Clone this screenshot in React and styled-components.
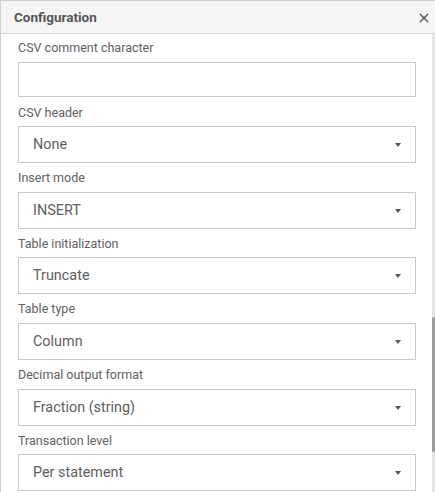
import React from 'react';
import styled, { createGlobalStyle } from 'styled-components';

const fields = [
    { label: 'CSV comment character', type: 'input' },
    { label: 'CSV header', value: 'None' },
    { label: 'Insert mode', value: 'INSERT' },
    { label: 'Table initialization', value: 'Truncate' },
    { label: 'Table type', value: 'Column' },
    { label: 'Decimal output format', value: 'Fraction (string)' },
    { label: 'Transaction level', value: 'Per statement' },
];

const App = () => {
    return (
        <>
            <Global />
            <Panel>
                <Header>
                    <Title>Configuration</Title>
                    <Close aria-label="close">
                        <svg width="10" height="10" viewBox="0 0 10 10">
                            <path d="M1 1 L9 9 M9 1 L1 9" stroke="#555" strokeWidth="1.5" fill="none" />
                        </svg>
                    </Close>
                </Header>
                <Body>
                    <Content>
                        {fields.map((f) => (
                            <Field key={f.label}>
                                <Label>{f.label}</Label>
                                {f.type === 'input' ? (
                                    <TextBox />
                                ) : (
                                    <Select>
                                        <span>{f.value}</span>
                                        <Caret />
                                    </Select>
                                )}
                            </Field>
                        ))}
                    </Content>
                    <Track>
                        <Thumb />
                    </Track>
                </Body>
            </Panel>
        </>
    );
};

const Global = createGlobalStyle`
    html, body {
        margin: 0;
        padding: 0;
        background: #fff;
        overflow: hidden;
    }
    body {
        font-family: Roboto, "Liberation Sans", Arial, sans-serif;
        color: #5e5e5e;
    }
`;

const Panel = styled.div`
    width: 435px;
    height: 492px;
    box-sizing: border-box;
    border-left: 1px solid #cfcfcf;
    border-top: 1px solid #cfcfcf;
    display: flex;
    flex-direction: column;
    overflow: hidden;
`;

const Header = styled.div`
    height: 32px;
    flex-shrink: 0;
    display: flex;
    align-items: center;
    justify-content: space-between;
    padding: 0 6px 0 13px;
    background: #f5f5f5;
    border-bottom: 1px solid #d6d6d6;
`;

const Title = styled.div`
    font-size: 13.5px;
    font-weight: bold;
    color: #555;
`;

const Close = styled.div`
    width: 10px;
    height: 10px;
    display: flex;
    margin-top: 2px;
`;

const Body = styled.div`
    flex: 1;
    display: flex;
    min-height: 0;
`;

const Content = styled.div`
    flex: 1;
    padding: 6px 16px 0 17px;
`;

const Field = styled.div`
    display: flex;
    flex-direction: column;
    margin-bottom: 7px;
`;

const Label = styled.div`
    font-size: 12.5px;
    line-height: 15.6px;
    margin-bottom: 6px;
    color: #606060;
`;

const TextBox = styled.div`
    height: 35px;
    box-sizing: border-box;
    border: 1px solid #c9c9c9;
    margin-bottom: 1px;
`;

const Select = styled.div`
    height: 37px;
    box-sizing: border-box;
    border: 1px solid #c9c9c9;
    display: flex;
    align-items: center;
    justify-content: space-between;
    padding: 0 14px 0 14px;
    font-size: 14.4px;
    color: #5e5e5e;
`;

const Caret = styled.span`
    width: 0;
    height: 0;
    border-left: 3.5px solid transparent;
    border-right: 3.5px solid transparent;
    border-top: 4px solid #555;
    margin-top: 1px;
`;

const Track = styled.div`
    width: 3px;
    background: #e4e4e4;
    flex-shrink: 0;
`;

const Thumb = styled.div`
    width: 3px;
    height: 135px;
    margin-top: 283px;
    border-radius: 2px;
    background: #9a9a9a;
`;

export default App;
